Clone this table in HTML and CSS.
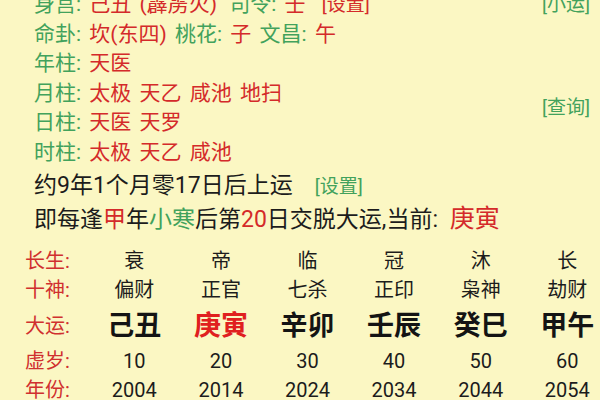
FILE: index.html
```html
<!DOCTYPE html>
<html lang="zh">
<head>
<meta charset="utf-8">
<link rel="stylesheet" href="styles.css">
</head>
<body>
<div class="page">
  <div class="info">
    <div class="left">
      <div class="line"><span class="g">身宫:</span> <span class="r">己丑 (霹雳火)</span> <span class="g sl">司令:</span> <span class="r">壬</span> <span class="link r setr">[设置]</span></div>
      <div class="line"><span class="g">命卦:</span> <span class="r">坎(东四)</span> <span class="g">桃花:</span> <span class="r">子</span> <span class="g">文昌:</span> <span class="r">午</span></div>
      <div class="line"><span class="g">年柱:</span> <span class="r">天医</span></div>
      <div class="line"><span class="g">月柱:</span> <span class="r">太极 天乙 咸池 地扫</span></div>
      <div class="line"><span class="g">日柱:</span> <span class="r">天医 天罗</span></div>
      <div class="line"><span class="g">时柱:</span> <span class="r">太极 天乙 咸池</span></div>
    </div>
    <div class="right">
      <span class="link g">[小运]</span>
      <span class="link g query">[查询]</span>
    </div>
  </div>
  <div class="line big start">约9年1个月零17日后上运<span class="link g set">[设置]</span></div>
  <div class="line big">即每逢<span class="r">甲</span>年<span class="g">小寒</span>后第<span class="r">20</span>日交脱大运,当前: <span class="r cur">庚寅</span></div>

  <div class="table">
    <div class="lab row-a">长生:</div>
    <div class="cell row-a">衰</div><div class="cell row-a">帝</div><div class="cell row-a">临</div><div class="cell row-a">冠</div><div class="cell row-a">沐</div><div class="cell row-a">长</div>

    <div class="lab row-b">十神:</div>
    <div class="cell row-b">偏财</div><div class="cell row-b">正官</div><div class="cell row-b">七杀</div><div class="cell row-b">正印</div><div class="cell row-b">枭神</div><div class="cell row-b">劫财</div>

    <div class="lab row-c">大运:</div>
    <div class="cell row-c gz">己丑</div><div class="cell row-c gz now">庚寅</div><div class="cell row-c gz">辛卯</div><div class="cell row-c gz">壬辰</div><div class="cell row-c gz">癸巳</div><div class="cell row-c gz">甲午</div>

    <div class="lab row-d">虚岁:</div>
    <div class="cell row-d">10</div><div class="cell row-d">20</div><div class="cell row-d">30</div><div class="cell row-d">40</div><div class="cell row-d">50</div><div class="cell row-d">60</div>

    <div class="lab row-e">年份:</div>
    <div class="cell row-e">2004</div><div class="cell row-e">2014</div><div class="cell row-e">2024</div><div class="cell row-e">2034</div><div class="cell row-e">2044</div><div class="cell row-e">2054</div>
  </div>
</div>
</body>
</html>
```

FILE: styles.css
```css
html, body {
  margin: 0;
  padding: 0;
  width: 600px;
  height: 400px;
  overflow: hidden;
  background: #fbf7c3;
}

.page {
  font-family: Roboto, "Noto Sans CJK SC", sans-serif;
  color: #1c1c1c;
  margin-top: -10px;
  width: 600px;
}

.g { color: #42a25c; }
.r { color: #d42a2a; }

.info {
  display: flex;
  justify-content: space-between;
  padding: 0 10px 0 34px;
}

.line {
  font-size: 21px;
  line-height: 29.6px;
  white-space: nowrap;
  word-spacing: 3px;
}

.right {
  display: flex;
  flex-direction: column;
  align-items: flex-end;
  font-size: 19px;
  line-height: 29.6px;
}

.link {
  font-size: 19px;
}

.sl {
  margin-left: 4px;
}

.setr {
  margin-left: 8px;
}

.query {
  margin-top: 73px;
}

.big {
  font-size: 23px;
  line-height: 32px;
  padding-left: 34px;
  word-spacing: 0;
}

.start {
  margin-top: 2px;
}

.set {
  margin-left: 22px;
}

.cur {
  font-size: 25px;
  margin-left: 6px;
}

.table {
  display: grid;
  grid-template-columns: 66px repeat(6, 86.6px);
  padding-left: 25px;
  margin-top: 11px;
}

.lab {
  color: #d0302f;
  font-size: 20px;
}

.cell {
  text-align: center;
  font-size: 20px;
}

.row-a, .row-b { line-height: 29px; }
.row-c { line-height: 42px; }
.row-d, .row-e { line-height: 29px; }

.gz {
  font-size: 27px;
  font-weight: 700;
  color: #141414;
}

.gz.now {
  color: #e0201f;
}
```
